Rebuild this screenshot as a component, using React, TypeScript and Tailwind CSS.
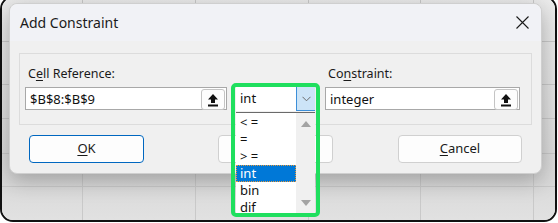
import React from 'react';

const font = { fontFamily: '"Noto Sans", "Open Sans", sans-serif' };

function UploadButton() {
  return (
    <div className="absolute right-[1px] top-[1px] w-[24px] h-[21px] rounded-[3px] border border-[#c4c4c4] bg-[#fdfdfd] flex items-center justify-center">
      <svg width="12" height="14" viewBox="0 0 12 14">
        <path d="M6 1 L11 6.5 H8 V10 H4 V6.5 H1 Z" fill="#111" />
        <rect x="1" y="11.5" width="10" height="2" fill="#111" />
      </svg>
    </div>
  );
}

function TextField({ value, width }: { value: string; width: string }) {
  return (
    <div className={`relative h-[23px] ${width} border border-[#a8a8a8] bg-white`}>
      <span className="absolute left-[4px] top-[2px] text-[13px] text-[#111]">{value}</span>
      <UploadButton />
    </div>
  );
}

function Label({ u, rest, pre }: { pre: string; u: string; rest: string }) {
  return (
    <div className="h-[16px] leading-[16px] pl-[3px] mb-[5px] text-[12.5px] text-[#1a1a1a]">
      {pre}
      <span className="underline underline-offset-2">{u}</span>
      {rest}
    </div>
  );
}

function Combo() {
  const items = ['< =', '=', '> =', 'int', 'bin', 'dif'];
  return (
    <div className="relative w-[79px] h-[24px] mt-[21px]">
      <div className="flex h-[24px] bg-white">
        <div className="flex-1 pl-[4px] text-[13px] leading-[23px] text-[#111]">int</div>
        <div className="w-[19px] h-[24px] bg-[#cce4f7] border-l border-b border-[#3c8fd8] flex items-center justify-center">
          <svg width="9" height="6" viewBox="0 0 9 6">
            <path d="M0.5 0.8 L4.5 4.8 L8.5 0.8" fill="none" stroke="#6b6b6b" strokeWidth="1" />
          </svg>
        </div>
      </div>
      <div className="absolute left-0 top-[25px] w-[79px] h-[101px] flex border-t border-[#6a6a6a] bg-white z-10 overflow-hidden">
        <div className="flex-1 flex flex-col pt-[1px]">
          {items.map((it) => (
            <div
              key={it}
              className={`h-[17px] shrink-0 text-[13px] ${
                it === 'int'
                  ? 'bg-[#0078d7] text-white border border-dotted border-[#e89a3c] pl-[3px] leading-[15px]'
                  : 'text-[#111] pl-[4px] leading-[17px]'
              }`}
            >
              {it}
            </div>
          ))}
        </div>
        <div className="w-[19px] bg-[#f0f0f0] flex flex-col items-center justify-between pt-[8px] pb-[7px]">
          <svg width="10" height="6" viewBox="0 0 10 6">
            <path d="M5 0 L10 6 H0 Z" fill="#a3a3a3" />
          </svg>
          <svg width="10" height="6" viewBox="0 0 10 6">
            <path d="M0 0 H10 L5 6 Z" fill="#a3a3a3" />
          </svg>
        </div>
      </div>
      <div className="absolute -left-[5px] -top-[4px] w-[89px] h-[134px] border-4 border-[#1fdf5e] rounded-[5px] pointer-events-none z-20" />
    </div>
  );
}

function Grid() {
  const xs = [80, 193, 306, 418, 531];
  const ys = [40, 83, 117, 152, 185, 219];
  return (
    <svg className="absolute left-0 top-0" width="558" height="226">
      <defs>
        <linearGradient id="shade" x1="0" y1="0" x2="0" y2="1">
          <stop offset="0" stopColor="#ececec" />
          <stop offset="0.8" stopColor="#d9d9d9" />
          <stop offset="1" stopColor="#e2e2e2" />
        </linearGradient>
      </defs>
      <rect width="558" height="226" fill="url(#shade)" />
      {xs.map((x) => (
        <line key={x} x1={x + 0.5} y1="0" x2={x + 0.5} y2="226" stroke="#c9c9c9" />
      ))}
      {ys.map((y) => (
        <line key={y} x1="0" y1={y + 3.5} x2="558" y2={y + 3.5} stroke="#c9c9c9" />
      ))}
    </svg>
  );
}

export default function App() {
  return (
    <div className="relative w-[558px] h-[223px] overflow-hidden bg-white" style={font}>
      <div className="relative w-[557px] h-[226px] -mt-[4px] border-2 border-[#111] rounded-[13px] overflow-hidden">
        <Grid />
      </div>

      <div className="absolute left-[9px] top-[3px] w-[533px] h-[171px] rounded-[8px] border border-[#cfcfcf] bg-[#f0f0f0] shadow-[0_6px_22px_rgba(0,0,0,0.28)] flex flex-col">
        <div className="h-[37px] shrink-0 rounded-t-[8px] bg-[#f1f2f6] flex items-center justify-between pl-[10px] pr-[12px]">
          <span className="text-[14px] text-[#1a1a1a]">Add Constraint</span>
          <svg width="13" height="13" viewBox="0 0 13 13">
            <path d="M0.5 0.5 L12.5 12.5 M12.5 0.5 L0.5 12.5" stroke="#1a1a1a" strokeWidth="1.1" />
          </svg>
        </div>

        <div className="px-[9px] pt-[12px]">
          <div className="h-[72px] border border-[#dcdcdc] flex pl-[5px] pt-[12px]">
            <div className="w-[202px]">
              <Label pre="C" u="e" rest="ll Reference:" />
              <TextField value="$B$8:$B$9" width="w-[202px]" />
            </div>
            <div className="ml-[9px]">
              <Combo />
            </div>
            <div className="ml-[10px] w-[195px]">
              <Label pre="Co" u="n" rest="straint:" />
              <TextField value="integer" width="w-[195px]" />
            </div>
          </div>

          <div className="flex mt-[10px] text-[13px] text-[#1a1a1a]">
            <button className="ml-[10px] w-[115px] h-[28px] rounded-[4px] border border-[#0067c0] bg-[#fdfdfd]">
              <span className="underline underline-offset-2">O</span>K
            </button>
            <button className="ml-[74px] w-[115px] h-[28px] rounded-[4px] border border-[#d0d0d0] bg-[#fdfdfd]">
              <span className="underline underline-offset-2">A</span>dd
            </button>
            <button className="ml-[65px] w-[124px] h-[28px] rounded-[4px] border border-[#d0d0d0] bg-[#fdfdfd]">
              <span className="underline underline-offset-2">C</span>ancel
            </button>
          </div>
        </div>
      </div>
    </div>
  );
}
